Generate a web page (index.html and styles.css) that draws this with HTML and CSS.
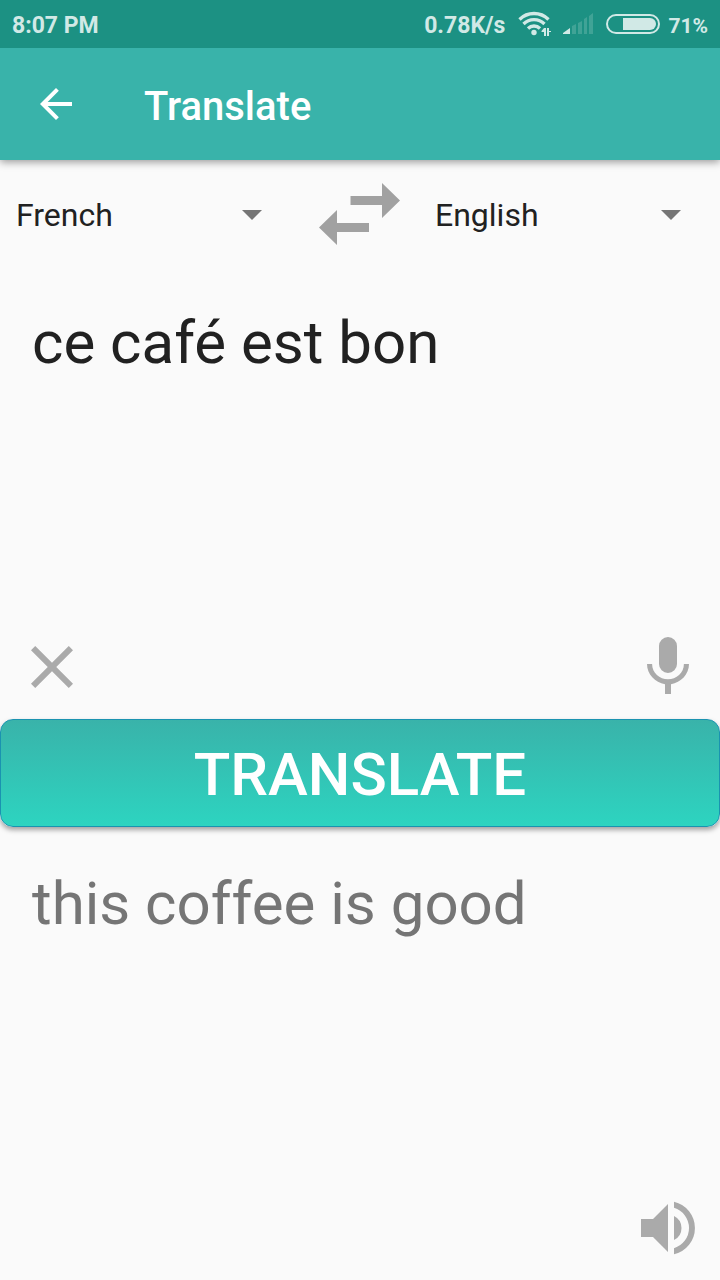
FILE: index.html
```html
<!DOCTYPE html>
<html lang="en">
<head>
<meta charset="utf-8">
<meta name="viewport" content="width=device-width, initial-scale=1">
<title>Translate</title>
<link rel="stylesheet" href="styles.css">
</head>
<body>
<div class="status-bar">
  <span class="status-text">8:07 PM</span>
  <div class="indicators">
    <span class="status-text">0.78K/s</span>
    <svg class="wifi" width="34" height="26" viewBox="0 0 34 26" aria-hidden="true">
      <g fill="none" stroke="currentColor" stroke-width="3.300">
        <path d="M1.500 8.500a20.500 20.500 0 0 1 29 0"/>
        <path d="M5.500 13a15 15 0 0 1 21 0"/>
        <path d="M10 17.500a8.500 8.500 0 0 1 12 0"/>
      </g>
      <circle cx="16" cy="21.500" r="2.700" fill="currentColor"/>
      <path fill="currentColor" d="M26 17h2v8h-2v-4h-2.500v-1zM29 17h2v3h2v1h-2v4h-2z"/>
    </svg>
    <svg class="signal" width="32" height="22" viewBox="0 0 32 22" aria-hidden="true">
      <path fill="currentColor" d="M1 21v-1l7-5v6z"/>
      <path fill="currentColor" opacity=".2" d="M10 21v-8l4-2v10zM16 21V10l4-2v13zM22 21V6l3-2v17zM27 21V3l4-3v21z"/>
    </svg>
    <svg class="battery" width="54" height="20" viewBox="0 0 54 20" aria-hidden="true">
      <rect x="1" y="1" width="52" height="18" rx="9" fill="none" stroke="currentColor" stroke-width="2"/>
      <path fill="currentColor" d="M17 4h27a6 6 0 0 1 0 12H17z"/>
    </svg>
    <span class="status-text battery-level">71%</span>
  </div>
</div>
<header class="app-bar">
  <button class="icon-button back" type="button" aria-label="Back">
    <svg width="48" height="48" viewBox="0 0 24 24" aria-hidden="true"><path fill="currentColor" d="M20 11H7.830l5.590-5.590L12 4l-8 8 8 8 1.410-1.410L7.830 13H20z"/></svg>
  </button>
  <h1 class="title">Translate</h1>
</header>
<main class="translator">
  <div class="languages">
    <div class="picker">
      <select class="picker-select" aria-label="Source language"><option selected>French</option><option>English</option></select>
      <svg class="caret" width="20" height="10" viewBox="0 0 20 10" aria-hidden="true"><path fill="currentColor" d="M0 0h20L10 10z"/></svg>
    </div>
    <button class="icon-button swap" type="button" aria-label="Swap languages">
      <svg width="82" height="62" viewBox="0 0 82 62" aria-hidden="true"><path fill="currentColor" d="M31.500 13H63V0l18 17.500L63 35V22H31.500zM50 40H18V27L0 44.500 18 62V49h32z"/></svg>
    </button>
    <div class="picker">
      <select class="picker-select" aria-label="Target language"><option selected>English</option><option>French</option></select>
      <svg class="caret" width="20" height="10" viewBox="0 0 20 10" aria-hidden="true"><path fill="currentColor" d="M0 0h20L10 10z"/></svg>
    </div>
  </div>
  <section class="panel">
    <textarea class="source-text" rows="1" aria-label="Text to translate" spellcheck="false">ce café est bon</textarea>
    <div class="actions">
      <button class="icon-button" type="button" aria-label="Clear text">
        <svg width="72" height="72" viewBox="0 0 24 24" aria-hidden="true"><path fill="currentColor" d="M19 6.410L17.590 5 12 10.590 6.410 5 5 6.410 10.590 12 5 17.590 6.410 19 12 13.410 17.590 19 19 17.590 13.410 12z"/></svg>
      </button>
      <button class="icon-button last" type="button" aria-label="Speak text">
        <svg width="72" height="72" viewBox="0 0 24 24" aria-hidden="true"><path fill="currentColor" d="M12 14a3 3 0 0 0 3-3V5a3 3 0 0 0-6 0v6a3 3 0 0 0 3 3zm5.300-3c0 3-2.540 5.100-5.300 5.100S6.700 14 6.700 11H5c0 3.410 2.720 6.230 6 6.720V21h2v-3.280c3.280-.480 6-3.300 6-6.720z"/></svg>
      </button>
    </div>
  </section>
  <button class="translate-button" type="button">TRANSLATE</button>
  <section class="panel">
    <p class="result-text">this coffee is good</p>
    <div class="actions">
      <button class="icon-button last" type="button" aria-label="Listen to translation">
        <svg width="72" height="72" viewBox="0 0 24 24" aria-hidden="true"><path fill="currentColor" d="M3 9v6h4l5 5V4L7 9zm13.500 3A4.500 4.500 0 0 0 14 7.970v8.050A4.500 4.500 0 0 0 16.500 12zM14 3.230v2.060a7 7 0 0 1 0 13.420v2.060a9 9 0 0 0 0-17.540z"/></svg>
      </button>
    </div>
  </section>
</main>
</body>
</html>
```
FILE: styles.css
```css
* {
  box-sizing: border-box;
}

body {
  margin: 0;
  min-height: 100vh;
  display: flex;
  flex-direction: column;
  background: #fafafa;
  color: #212121;
  font-family: Roboto, "Noto Sans", sans-serif;
}

button,
select,
textarea {
  margin: 0;
  padding: 0;
  border: 0;
  background: none;
  color: inherit;
  font: inherit;
}

svg {
  display: block;
}

.status-bar {
  position: relative;
  z-index: 1;
  display: flex;
  align-items: center;
  justify-content: space-between;
  height: 48px;
  padding: 0 12px;
  background: #1c9183;
  color: #d1e9e6;
  font-size: 23px;
  font-weight: 700;
  line-height: 28px;
}

.status-text {
  padding-top: 4px;
}

.battery-level {
  font-size: 21px;
}

.indicators {
  display: flex;
  align-items: center;
}

.wifi {
  margin-left: 13px;
}

.signal {
  margin-left: 10px;
}

.battery {
  margin: 0 8px 0 12px;
}

.app-bar {
  display: flex;
  align-items: center;
  gap: 64px;
  height: 112px;
  padding: 0 32px;
  background: #39b3aa;
  color: #fff;
  box-shadow: 0 2px 8px rgba(0, 0, 0, 0.4);
}

.title {
  margin: 0;
  padding-top: 6px;
  font-size: 40px;
  font-weight: 500;
  line-height: 48px;
}

.translator {
  flex: 1;
  display: flex;
  flex-direction: column;
}

.languages {
  display: grid;
  grid-template-columns: 1fr 118px 1fr;
  align-items: center;
  padding: 23px 0 21px;
}

.picker {
  display: grid;
  grid-template-columns: 1fr auto;
  align-items: center;
  padding-top: 2px;
}

.picker-select {
  grid-area: 1 / 1 / 2 / 3;
  width: 100%;
  height: 56px;
  padding: 0 64px 0 16px;
  appearance: none;
  font-size: 32px;
}

.caret {
  grid-area: 1 / 2;
  margin-right: 39px;
  color: #757575;
  pointer-events: none;
}

.icon-button {
  display: block;
  color: #aaa;
}

.back {
  color: #fff;
}

.swap {
  justify-self: center;
  color: #a1a1a1;
}

.panel {
  flex: 1;
  display: flex;
  flex-direction: column;
  padding: 41px 16px 16px;
}

.source-text,
.result-text {
  flex: 1;
  width: 100%;
  margin: 0;
  padding: 0 16px;
  font-size: 60px;
  line-height: 72px;
}

.source-text {
  resize: none;
  outline: none;
}

.result-text {
  color: #757575;
}

.actions {
  display: flex;
}

.last {
  margin-left: auto;
}

.translate-button {
  height: 108px;
  padding-top: 2px;
  border: 1px solid #1a93b0;
  border-radius: 13px;
  background: linear-gradient(#39b3aa, #2dd4c0);
  box-shadow: 0 3px 5px rgba(0, 0, 0, 0.35);
  color: #fff;
  font-size: 60px;
  font-weight: 500;
}
```
